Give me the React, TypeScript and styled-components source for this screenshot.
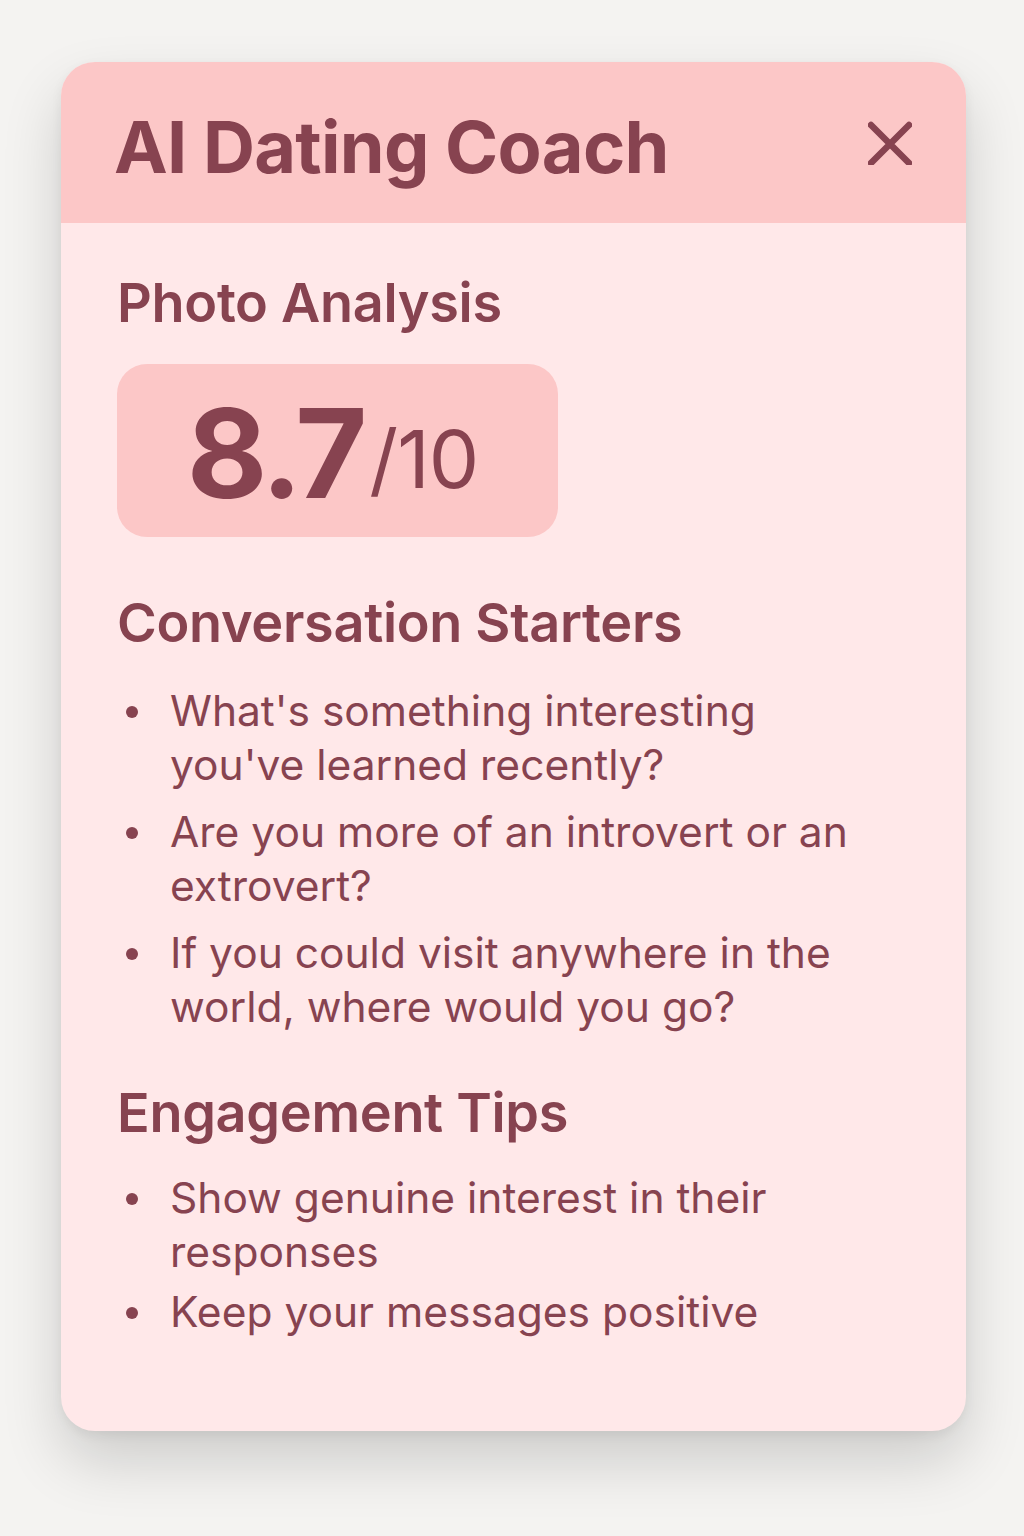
import React from "react";
import styled, { createGlobalStyle } from "styled-components";

const Global = createGlobalStyle`
  html, body { margin: 0; padding: 0; }
  body {
    background: #f4f3f1;
    font-family: Inter, "Noto Sans", "Liberation Sans", sans-serif;
    color: #874350;
  }
`;

const Page = styled.div`
  padding: 62px 58px 106px 61px;
`;

const Card = styled.div`
  width: 905px;
  border-radius: 34px;
  overflow: hidden;
  background: #ffe8e9;
  box-shadow: 0 30px 60px rgba(0, 0, 0, 0.16), 0 4px 12px rgba(0, 0, 0, 0.06);
`;

const Header = styled.header`
  height: 161px;
  background: #fcc7c7;
  display: flex;
  align-items: center;
  justify-content: space-between;
  padding: 0 54px 0 53px;
  box-sizing: border-box;
`;

const Title = styled.h1`
  margin: 0;
  font-size: 72px;
  font-weight: 700;
  letter-spacing: -0.7px;
  line-height: 1;
  padding-top: 8px;
`;

const CloseButton = styled.button`
  border: 0;
  background: none;
  padding: 0;
  width: 44px;
  height: 44px;
  display: flex;
  color: #874350;
  cursor: pointer;
`;

const Body = styled.div`
  padding: 48px 56px 92px 56px;
  display: flex;
  flex-direction: column;
`;

const Section = styled.section<{ $top?: number }>`
  margin-top: ${(p) => p.$top ?? 0}px;
  display: flex;
  flex-direction: column;
`;

const Heading = styled.h2<{ $gap: number }>`
  margin: 0 0 ${(p) => p.$gap}px 0;
  font-size: 54px;
  font-weight: 600;
  line-height: 64.8px;
  letter-spacing: -0.3px;
`;

const ScoreBox = styled.div`
  width: 441px;
  height: 173px;
  border-radius: 30px;
  background: #fcc7c7;
  display: flex;
  align-items: center;
  justify-content: center;
  box-sizing: border-box;
  padding-right: 10px;
`;

const ScoreLine = styled.div`
  line-height: 1;
  white-space: nowrap;
  padding-top: 6px;
`;

const ScoreValue = styled.span`
  font-size: 124px;
  font-weight: 700;
  letter-spacing: -4px;
`;

const ScoreMax = styled.span`
  font-size: 80px;
  font-weight: 400;
  margin-left: 6px;
  vertical-align: 10px;
  letter-spacing: -1px;
`;

const List = styled.ul<{ $gap: number }>`
  margin: 0;
  padding: 0 40px 0 0;
  list-style: none;
  display: flex;
  flex-direction: column;
  gap: ${(p) => p.$gap}px;
`;

const Item = styled.li`
  position: relative;
  padding-left: 53px;
  font-size: 42.5px;
  line-height: 54px;
  font-weight: 400;
  letter-spacing: 0px;
  &::before {
    content: "";
    position: absolute;
    left: 9px;
    top: 22px;
    width: 12px;
    height: 12px;
    border-radius: 50%;
    background: #874350;
  }
`;

const CloseIcon = () => (
  <svg width="44" height="44" viewBox="0 0 44 44" fill="none">
    <path d="M3 4 L41 42 M41 4 L3 42" stroke="currentColor" strokeWidth="6.5" strokeLinecap="round" />
  </svg>
);

export default function App() {
  return (
    <>
      <Global />
      <Page>
        <Card>
          <Header>
            <Title>AI Dating Coach</Title>
            <CloseButton aria-label="Close">
              <CloseIcon />
            </CloseButton>
          </Header>
          <Body>
            <Section>
              <Heading $gap={28}>Photo Analysis</Heading>
              <ScoreBox>
                <ScoreLine>
                  <ScoreValue>8.7</ScoreValue>
                  <ScoreMax>/10</ScoreMax>
                </ScoreLine>
              </ScoreBox>
            </Section>
            <Section $top={54}>
              <Heading $gap={28}>Conversation Starters</Heading>
              <List $gap={13}>
                <Item>What's something interesting you've learned recently?</Item>
                <Item>Are you more of an introvert or an extrovert?</Item>
                <Item>If you could visit anywhere in the world, where would you go?</Item>
              </List>
            </Section>
            <Section $top={47}>
              <Heading $gap={26}>Engagement Tips</Heading>
              <List $gap={6}>
                <Item>Show genuine interest in their responses</Item>
                <Item>Keep your messages positive</Item>
              </List>
            </Section>
          </Body>
        </Card>
      </Page>
    </>
  );
}
